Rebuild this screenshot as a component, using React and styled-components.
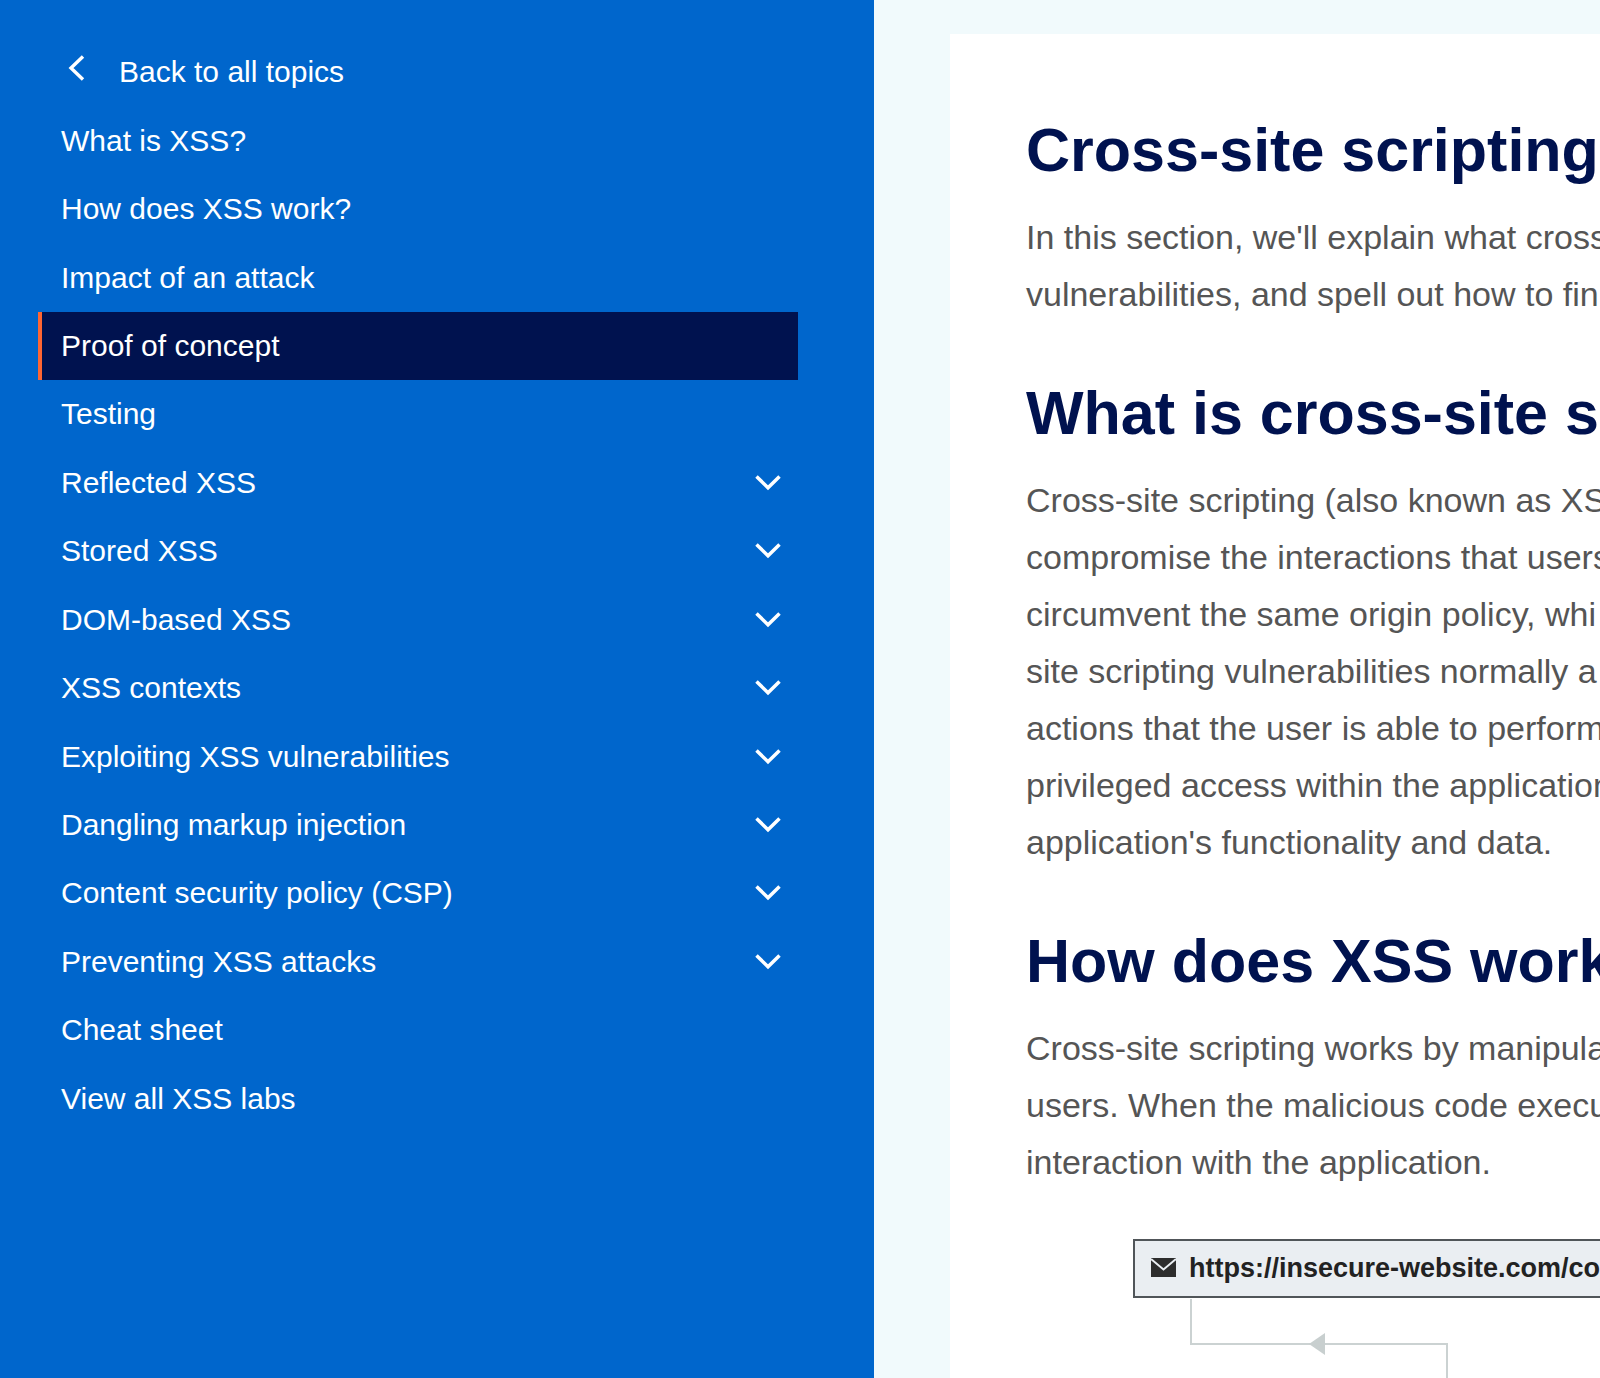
import React from "react";
import styled, { createGlobalStyle } from "styled-components";

const GlobalStyle = createGlobalStyle`
  *, *::before, *::after { box-sizing: border-box; }
  body {
    margin: 0;
    background: #f1fafc;
    font-family: "Liberation Sans", Arial, sans-serif;
  }
`;

const Page = styled.div`
  display: grid;
  grid-template-columns: minmax(0, 874px) minmax(0, 1fr);
  height: 100vh;
  overflow: hidden;
`;

const Sidebar = styled.nav`
  padding: 38px 76px 38px 38px;
  background: #0066cc;
`;

const Menu = styled.ul`
  display: grid;
  grid-auto-rows: 1fr;
  min-height: 1095px;
  margin: 0;
  padding: 0;
  list-style: none;
`;

const MenuItem = styled.li`
  display: flex;
`;

const MenuLink = styled.a`
  flex: 1;
  display: flex;
  align-items: center;
  gap: 28px;
  padding: 0 17px 0 19px;
  border-left: 4px solid ${(p) => (p.$active ? "#ff6633" : "transparent")};
  background: ${(p) => (p.$active ? "#00124f" : "transparent")};
  background-clip: padding-box;
  color: #ffffff;
  font-size: 30px;
  line-height: 34px;
  text-decoration: none;
`;

const Label = styled.span`
  flex: 1;
`;

const Content = styled.main`
  padding: 34px 0 0 76px;
  min-width: 0;
`;

const Article = styled.article`
  min-height: 100%;
  padding: 80px 0 0 76px;
  background: #ffffff;
  overflow: hidden;
  white-space: nowrap;
`;

const Section = styled.section`
  margin-bottom: 54px;
`;

const Heading = styled.h2`
  margin: 0 0 23px;
  color: #00124f;
  font-size: 61px;
  line-height: 72px;
  font-weight: 700;
`;

const Paragraph = styled.p`
  margin: 0;
  color: #555555;
  font-size: 34px;
  line-height: 57px;
`;

const Figure = styled.figure`
  margin: 48px 0 0 107px;
`;

const UrlBar = styled.div`
  display: flex;
  align-items: center;
  gap: 13px;
  height: 59px;
  padding: 0 16px 2px;
  border: 2px solid #505559;
  border-right: 0;
  background: #eaeef2;
  color: #222222;
  font-size: 27px;
  line-height: 32px;
  font-weight: 700;
`;

const Drawing = styled.svg`
  display: block;
  flex: none;
`;

const BackIcon = () => (
  <Drawing width="30" height="34" viewBox="0 0 30 34" fill="none" stroke="#fff" strokeWidth="3.4" aria-hidden="true">
    <path d="M22 1.5 10 13 22 24.5" />
  </Drawing>
);

const ExpandIcon = () => (
  <Drawing width="26" height="16" viewBox="0 0 26 16" fill="none" stroke="#fff" strokeWidth="3.5" aria-hidden="true">
    <path d="M1.5 1.5 13 12.7 24.5 1.5" />
  </Drawing>
);

const MailIcon = () => (
  <Drawing width="25" height="19" viewBox="0 0 25 19" aria-hidden="true">
    <rect width="25" height="19" fill="#2d2d2d" />
    <path d="M0 1 12.5 11.5 25 1" fill="none" stroke="#eaeef2" strokeWidth="2" />
  </Drawing>
);

const Connector = () => (
  <Drawing width="320" height="90" viewBox="0 0 320 90" aria-hidden="true">
    <path d="M58 1V46H314V90" fill="none" stroke="#cbd2d2" strokeWidth="2" />
    <path d="M176 46 192 35V57Z" fill="#c8cfcf" />
  </Drawing>
);

const topics = [
  { label: "Back to all topics", back: true },
  { label: "What is XSS?" },
  { label: "How does XSS work?" },
  { label: "Impact of an attack" },
  { label: "Proof of concept", active: true },
  { label: "Testing" },
  { label: "Reflected XSS", expandable: true },
  { label: "Stored XSS", expandable: true },
  { label: "DOM-based XSS", expandable: true },
  { label: "XSS contexts", expandable: true },
  { label: "Exploiting XSS vulnerabilities", expandable: true },
  { label: "Dangling markup injection", expandable: true },
  { label: "Content security policy (CSP)", expandable: true },
  { label: "Preventing XSS attacks", expandable: true },
  { label: "Cheat sheet" },
  { label: "View all XSS labs" },
];

const sections = [
  {
    title: "Cross-site scripting",
    lines: ["In this section, we'll explain what cross", "vulnerabilities, and spell out how to fin"],
  },
  {
    title: "What is cross-site sc",
    lines: [
      "Cross-site scripting (also known as XS",
      "compromise the interactions that users",
      "circumvent the same origin policy, whi",
      "site scripting vulnerabilities normally a",
      "actions that the user is able to perform",
      "privileged access within the application",
      "application's functionality and data.",
    ],
  },
  {
    title: "How does XSS work",
    lines: [
      "Cross-site scripting works by manipula",
      "users. When the malicious code execu",
      "interaction with the application.",
    ],
    diagram: true,
  },
];

export default function App() {
  return (
    <>
      <GlobalStyle />
      <Page>
        <Sidebar aria-label="Topics">
          <Menu>
            {topics.map((t) => (
              <MenuItem key={t.label}>
                <MenuLink href="#" $active={t.active} aria-current={t.active ? "true" : undefined}>
                  {t.back && <BackIcon />}
                  <Label>{t.label}</Label>
                  {t.expandable && <ExpandIcon />}
                </MenuLink>
              </MenuItem>
            ))}
          </Menu>
        </Sidebar>
        <Content>
          <Article>
            {sections.map((s, i) => (
              <Section key={s.title}>
                <Heading as={i === 0 ? "h1" : "h2"}>{s.title}</Heading>
                <Paragraph>
                  {s.lines.map((line, n) => (
                    <React.Fragment key={line}>
                      {n > 0 && <br />}
                      {line}
                    </React.Fragment>
                  ))}
                </Paragraph>
                {s.diagram && (
                  <Figure>
                    <UrlBar>
                      <MailIcon />
                      <span>https://insecure-website.com/com</span>
                    </UrlBar>
                    <Connector />
                  </Figure>
                )}
              </Section>
            ))}
          </Article>
        </Content>
      </Page>
    </>
  );
}
